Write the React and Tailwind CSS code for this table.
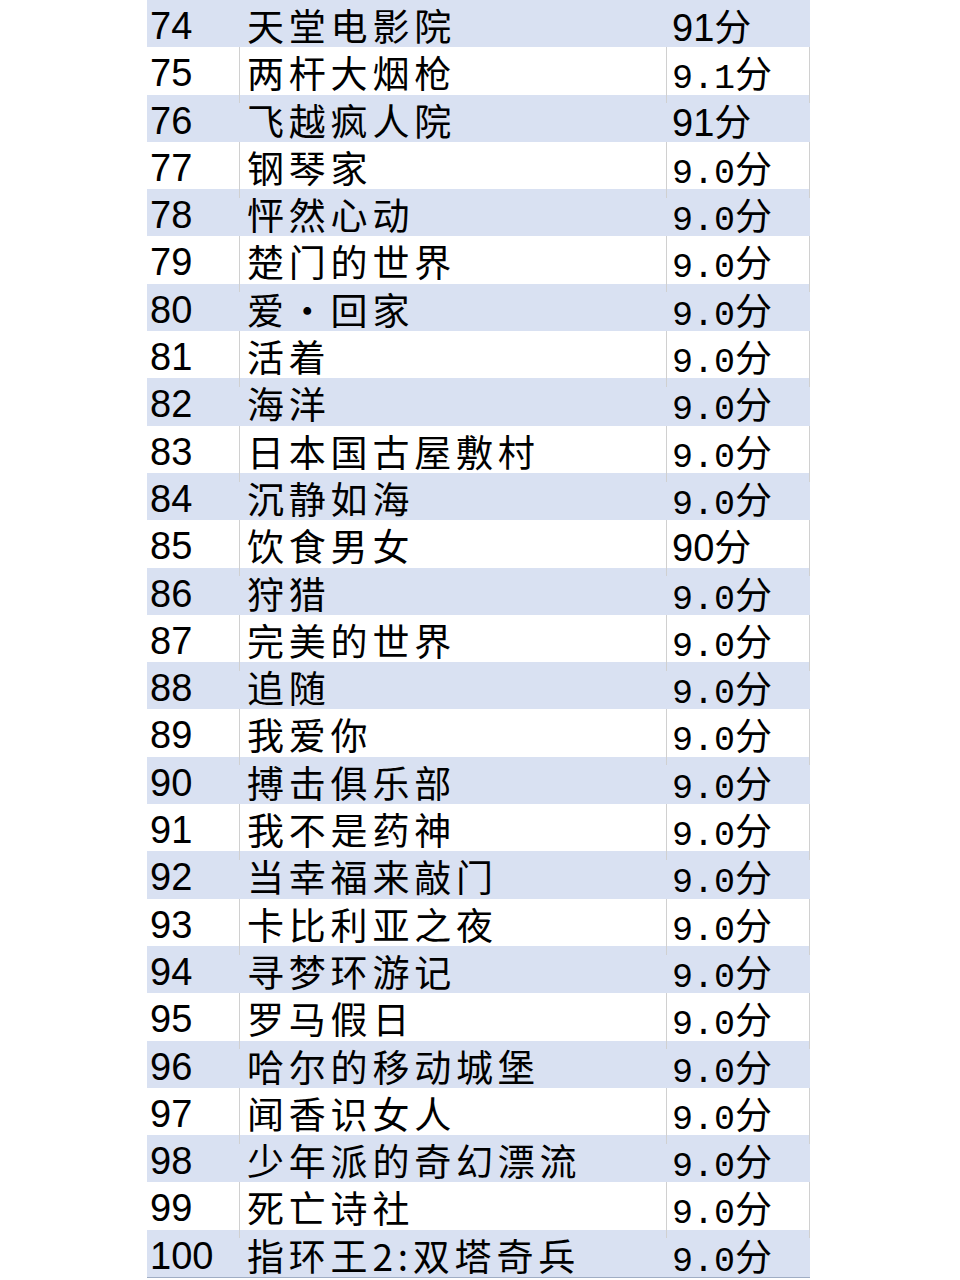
const rows = [
  ['74', '天堂电影院', '91分'],
  ['75', '两杆大烟枪', '9.1分'],
  ['76', '飞越疯人院', '91分'],
  ['77', '钢琴家', '9.0分'],
  ['78', '怦然心动', '9.0分'],
  ['79', '楚门的世界', '9.0分'],
  ['80', '爱·回家', '9.0分'],
  ['81', '活着', '9.0分'],
  ['82', '海洋', '9.0分'],
  ['83', '日本国古屋敷村', '9.0分'],
  ['84', '沉静如海', '9.0分'],
  ['85', '饮食男女', '90分'],
  ['86', '狩猎', '9.0分'],
  ['87', '完美的世界', '9.0分'],
  ['88', '追随', '9.0分'],
  ['89', '我爱你', '9.0分'],
  ['90', '搏击俱乐部', '9.0分'],
  ['91', '我不是药神', '9.0分'],
  ['92', '当幸福来敲门', '9.0分'],
  ['93', '卡比利亚之夜', '9.0分'],
  ['94', '寻梦环游记', '9.0分'],
  ['95', '罗马假日', '9.0分'],
  ['96', '哈尔的移动城堡', '9.0分'],
  ['97', '闻香识女人', '9.0分'],
  ['98', '少年派的奇幻漂流', '9.0分'],
  ['99', '死亡诗社', '9.0分'],
  ['100', '指环王2:双塔奇兵', '9.0分'],
]

function Score({ value }) {
  // "9.0分" style cells use a fixed-pitch digit font, "91分" doesn't
  const num = value.replace('分', '')
  const mono = num.includes('.')
  return (
    <span className="whitespace-nowrap">
      <span
        className={mono ? 'text-[35px]' : 'text-[38px]'}
        style={{ fontFamily: mono ? '"Liberation Mono", monospace' : '"Liberation Sans", Arial, sans-serif' }}
      >
        {num}
      </span>
      <span className="text-[37px]">分</span>
    </span>
  )
}

export default function App() {
  return (
    <div
      className="min-h-screen bg-white text-black"
      style={{ fontFamily: '"Liberation Sans", "Noto Sans CJK SC", sans-serif' }}
    >
      <div className="ml-[147px] w-[663px] border-b border-[#9fadc4]">
        {rows.map(([no, name, score], i) => {
          const blue = i % 2 === 0
          const line = blue ? 'border-transparent' : 'border-[#d0d0d0]'
          return (
            <div
              key={no}
              className={`grid grid-cols-[92px_427px_144px] h-[47.3px] leading-[47px] overflow-visible ${blue ? 'bg-[#d9e1f2]' : 'bg-white'}`}
            >
              <div className="pl-[3px] text-[38px] translate-y-[3px]">{no}</div>
              <div className={`border-l ${line} pl-[7px]`}>
                <div
                  className="text-[37px] tracking-[4.8px] whitespace-nowrap translate-y-[2px]"
                  style={{ fontFamily: '"Noto Sans CJK SC", sans-serif' }}
                >
                  {name}
                </div>
              </div>
              <div className={`border-l border-r ${line} pl-[5px]`}>
                <div className="translate-y-[2px]" style={{ fontFamily: '"Noto Sans CJK SC", sans-serif' }}>
                  <Score value={score} />
                </div>
              </div>
            </div>
          )
        })}
      </div>
    </div>
  )
}
